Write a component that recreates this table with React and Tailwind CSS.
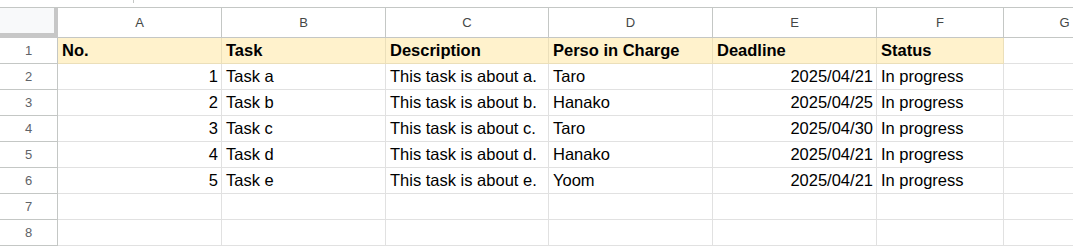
const COLS = [
  { key: 'A', w: 'w-[164px]' },
  { key: 'B', w: 'w-[164px]' },
  { key: 'C', w: 'w-[163px]' },
  { key: 'D', w: 'w-[164px]' },
  { key: 'E', w: 'w-[164px]' },
  { key: 'F', w: 'w-[127px]' },
  { key: 'G', w: 'w-[122px]' },
];

const HEAD = ['No.', 'Task', 'Description', 'Perso in Charge', 'Deadline', 'Status'];

const ROWS = [
  [1, 'Task a', 'This task is about a.', 'Taro', '2025/04/21', 'In progress'],
  [2, 'Task b', 'This task is about b.', 'Hanako', '2025/04/25', 'In progress'],
  [3, 'Task c', 'This task is about c.', 'Taro', '2025/04/30', 'In progress'],
  [4, 'Task d', 'This task is about d.', 'Hanako', '2025/04/21', 'In progress'],
  [5, 'Task e', 'This task is about e.', 'Yoom', '2025/04/21', 'In progress'],
];

// numbers and dates sit right, like a sheet does
const RIGHT = [true, false, false, false, true, false];

function RowNum({ n }) {
  return (
    <div className="w-[58px] shrink-0 h-full flex items-center justify-center border-r border-b border-[#c4c7c5] text-[13px] text-[#5f6368]">
      {n}
    </div>
  );
}

function Cell({ w, children, right, bold, yellow }) {
  return (
    <div
      className={`${w} shrink-0 h-full flex items-center border-r border-b overflow-hidden whitespace-nowrap text-[16.5px] leading-[19px] text-black ${
        right ? 'justify-end pr-[3px]' : 'pl-[4px]'
      } ${bold ? 'font-bold' : ''} ${yellow ? 'bg-[#fff2cc] border-[#ebdfba]' : 'border-[#e1e1e1]'}`}
    >
      {children}
    </div>
  );
}

export default function App() {
  return (
    <div className="w-[1073px] h-[246px] bg-white overflow-hidden font-['Liberation_Sans',Arial,sans-serif]">
      <div className="h-[7px] flex">
        <div className="w-[133px] shrink-0" />
        <div className="w-px h-[3px] bg-[#c4c7c5]" />
      </div>

      <div className="h-[31px] flex border-t border-[#c4c7c5]">
        <div className="w-[58px] shrink-0 h-full bg-[#f8f9fa] border-r-4 border-b-[5px] border-[#c7c7c7]" />
        {COLS.map((c) => (
          <div
            key={c.key}
            className={`${c.w} shrink-0 h-full flex items-center justify-center border-r border-b border-[#c4c7c5] text-[13px] text-[#444746]`}
          >
            {c.key}
          </div>
        ))}
      </div>

      <div className="h-[26px] flex">
        <RowNum n={1} />
        {HEAD.map((h, i) => (
          <Cell key={h} w={COLS[i].w} bold yellow>
            {h}
          </Cell>
        ))}
        <Cell w={COLS[6].w} />
      </div>

      {ROWS.map((r, ri) => (
        <div key={ri} className="h-[26px] flex">
          <RowNum n={ri + 2} />
          {r.map((v, i) => (
            <Cell key={i} w={COLS[i].w} right={RIGHT[i]}>
              {v}
            </Cell>
          ))}
          <Cell w={COLS[6].w} />
        </div>
      ))}

      {[7, 8].map((n) => (
        <div key={n} className="h-[26px] flex">
          <RowNum n={n} />
          {COLS.map((c) => (
            <Cell key={c.key} w={c.w} />
          ))}
        </div>
      ))}
    </div>
  );
}
